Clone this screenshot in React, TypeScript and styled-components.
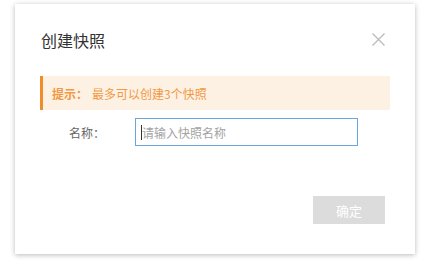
import React from 'react';
import styled, { createGlobalStyle } from 'styled-components';

const GlobalStyle = createGlobalStyle`
  html, body {
    margin: 0;
    padding: 0;
    background: #ffffff;
    font-family: "Noto Sans CJK SC", "Liberation Sans", sans-serif;
  }
`;

const Page = styled.div`
  width: 433px;
  height: 262px;
  padding: 4px 0 0 15px;
  box-sizing: border-box;
`;

const Dialog = styled.div`
  width: 400px;
  height: 250px;
  box-sizing: border-box;
  background: #fff;
  box-shadow: 0 1px 5px rgba(0, 0, 0, 0.28);
  display: flex;
  flex-direction: column;
  padding: 0 25px;
`;

const Header = styled.div`
  display: flex;
  justify-content: space-between;
  align-items: flex-start;
  padding: 25px 5px 0 1px;
  height: 72px;
  box-sizing: border-box;
`;

const Title = styled.h3`
  margin: 0;
  font-size: 16px;
  font-weight: 400;
  line-height: 22px;
  color: #333;
`;

const CloseButton = styled.button`
  width: 13px;
  height: 13px;
  padding: 0;
  margin-top: 4px;
  border: none;
  background: none;
  cursor: pointer;
  display: flex;
`;

const Alert = styled.div`
  height: 34px;
  display: flex;
  align-items: center;
  background: #fdf1e4;
  border-left: 3px solid #f08c2a;
  padding-left: 9px;
  font-size: 12px;
  color: #f29944;
`;

const AlertLabel = styled.span`
  font-weight: 700;
  margin-right: 4px;
`;

const FormRow = styled.div`
  display: flex;
  align-items: center;
  margin-top: 8px;
`;

const Label = styled.label`
  width: 95px;
  box-sizing: border-box;
  padding-left: 29px;
  font-size: 12px;
  color: #666;
`;

const InputWrap = styled.div`
  position: relative;
  width: 223px;
  height: 28px;
`;

const Input = styled.input`
  width: 100%;
  height: 100%;
  box-sizing: border-box;
  border: 1px solid #6aa7df;
  outline: none;
  padding: 0 6px;
  font-size: 12px;
  font-family: inherit;
  color: #333;

  &::placeholder {
    color: #a3a3a3;
  }
`;

const Caret = styled.span`
  position: absolute;
  left: 6px;
  top: 7px;
  width: 1px;
  height: 15px;
  background: #333;
`;

const Footer = styled.div`
  display: flex;
  justify-content: flex-end;
  margin-top: 50px;
  padding-right: 5px;
`;

const ConfirmButton = styled.button<{ disabled?: boolean }>`
  width: 72px;
  height: 28px;
  border: none;
  background: ${({ disabled }) => (disabled ? '#dcdcdc' : '#2d8cf0')};
  color: #fff;
  font-size: 13px;
  font-family: inherit;
  cursor: ${({ disabled }) => (disabled ? 'not-allowed' : 'pointer')};
`;

const App: React.FC = () => {
  return (
    <>
      <GlobalStyle />
      <Page>
        <Dialog>
          <Header>
            <Title>创建快照</Title>
            <CloseButton aria-label="关闭">
              <svg width="13" height="13" viewBox="0 0 13 13">
                <path d="M0.5 0.5L12.5 12.5M12.5 0.5L0.5 12.5" stroke="#bdbdbd" strokeWidth="1.4" />
              </svg>
            </CloseButton>
          </Header>
          <Alert>
            <AlertLabel>提示：</AlertLabel>
            <span>最多可以创建3个快照</span>
          </Alert>
          <FormRow>
            <Label>名称：</Label>
            <InputWrap>
              <Input placeholder="请输入快照名称" />
              <Caret />
            </InputWrap>
          </FormRow>
          <Footer>
            <ConfirmButton disabled>确定</ConfirmButton>
          </Footer>
        </Dialog>
      </Page>
    </>
  );
};

export default App;
